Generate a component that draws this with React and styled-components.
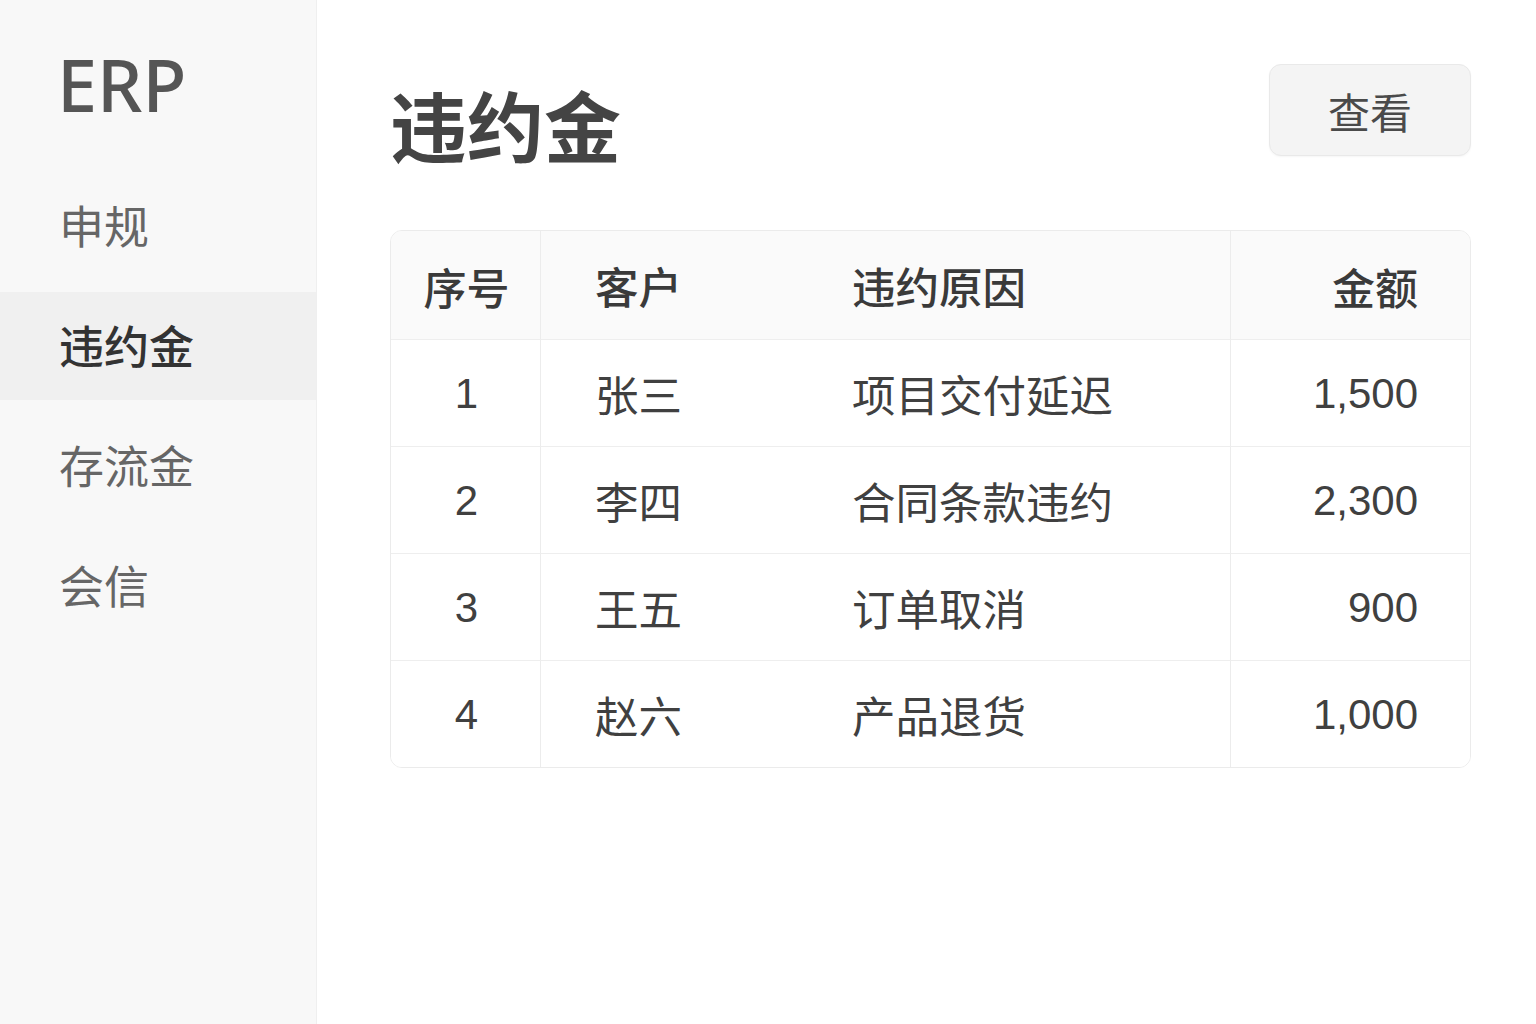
import React from "react";
import styled, { createGlobalStyle } from "styled-components";

const Global = createGlobalStyle`
  html, body { margin: 0; padding: 0; background: #ffffff; }
  body { font-family: "Liberation Sans", "Noto Sans CJK SC", sans-serif; color: #3a3a3a; }
  * { box-sizing: border-box; }
`;

const Layout = styled.div`
  display: flex;
  width: 1536px;
  height: 1024px;
  overflow: hidden;
`;

const Sidebar = styled.aside`
  width: 317px;
  flex-shrink: 0;
  background: #f8f8f8;
  border-right: 1px solid #efefef;
  display: flex;
  flex-direction: column;
`;

const Logo = styled.div`
  font-family: "Noto Sans", sans-serif;
  font-size: 72px;
  line-height: 1;
  font-weight: 500;
  color: #555555;
  padding: 48px 0 0 57px;
  height: 172px;
  letter-spacing: 0px;
`;

const Nav = styled.nav`
  display: flex;
  flex-direction: column;
  gap: 12px;
`;

const NavItem = styled.div`
  height: 108px;
  display: flex;
  align-items: center;
  padding-left: 59px;
  padding-bottom: 4px;
  font-family: "Noto Sans CJK SC", sans-serif;
  font-size: 45px;
  font-weight: ${(p) => (p.$active ? 500 : 400)};
  color: ${(p) => (p.$active ? "#333333" : "#666666")};
  background: ${(p) => (p.$active ? "#f0f0f0" : "transparent")};
`;

const Main = styled.main`
  flex: 1;
  padding: 64px 65px 0 73px;
  display: flex;
  flex-direction: column;
`;

const Header = styled.div`
  display: flex;
  justify-content: space-between;
  align-items: flex-start;
  height: 166px;
`;

const Title = styled.h1`
  margin: 14px 0 0 0;
  font-family: "Noto Sans CJK SC", sans-serif;
  font-size: 77px;
  line-height: 1.2;
  font-weight: 600;
  color: #444444;
`;

const Button = styled.button`
  width: 202px;
  height: 92px;
  border-radius: 12px;
  border: 1px solid #e9e9e9;
  background: #f4f4f4;
  font-family: "Noto Sans CJK SC", sans-serif;
  font-size: 42px;
  color: #4a4a4a;
  box-shadow: 0 1px 2px rgba(0,0,0,0.04);
  padding: 0;
`;

const Table = styled.div`
  border: 1px solid #ebebeb;
  border-radius: 12px;
  overflow: hidden;
  display: grid;
  grid-template-columns: 150px 257px 433px 1fr;
`;

const Cell = styled.div`
  height: ${(p) => (p.$head ? "108px" : "107px")};
  display: flex;
  align-items: center;
  justify-content: ${(p) => (p.$align === "center" ? "center" : p.$align === "right" ? "flex-end" : "flex-start")};
  padding: ${(p) => (p.$align === "right" ? "2px 52px 0 0" : p.$align === "center" ? "2px 0 0 2px" : p.$pl)};
  font-size: ${(p) => (p.$head ? "43px" : "42px")};
  font-weight: ${(p) => (p.$head ? 500 : 400)};
  color: ${(p) => (p.$head ? "#3a3a3a" : "#404040")};
  background: ${(p) => (p.$head ? "#fafafa" : "#ffffff")};
  border-top: ${(p) => (p.$head ? "none" : "1px solid #eeeeee")};
  border-right: ${(p) => (p.$divider ? "1px solid #ececec" : "none")};
  font-family: ${(p) => (p.$head ? '"Noto Sans CJK SC", sans-serif' : '"Liberation Sans", "Noto Sans CJK SC", sans-serif')};
`;

const Cjk = styled.span`
  font-size: 43.5px;
`;

const rows = [
  ["1", "张三", "项目交付延迟", "1,500"],
  ["2", "李四", "合同条款违约", "2,300"],
  ["3", "王五", "订单取消", "900"],
  ["4", "赵六", "产品退货", "1,000"],
];

function Row({ cells, head }) {
  return (
    <>
      <Cell $head={head} $align="center" $divider>{cells[0]}</Cell>
      <Cell $head={head} $pl="0 0 0 54px"><Cjk>{cells[1]}</Cjk></Cell>
      <Cell $head={head} $pl="0 0 0 54px" $divider><Cjk>{cells[2]}</Cjk></Cell>
      <Cell $head={head} $align="right">{cells[3]}</Cell>
    </>
  );
}

export default function App() {
  return (
    <>
      <Global />
      <Layout>
        <Sidebar>
          <Logo>ERP</Logo>
          <Nav>
            <NavItem>申规</NavItem>
            <NavItem $active>违约金</NavItem>
            <NavItem>存流金</NavItem>
            <NavItem>会信</NavItem>
          </Nav>
        </Sidebar>
        <Main>
          <Header>
            <Title>违约金</Title>
            <Button>查看</Button>
          </Header>
          <Table>
            <Row head cells={["序号", "客户", "违约原因", "金额"]} />
            {rows.map((r) => (
              <Row key={r[0]} cells={r} />
            ))}
          </Table>
        </Main>
      </Layout>
    </>
  );
}
